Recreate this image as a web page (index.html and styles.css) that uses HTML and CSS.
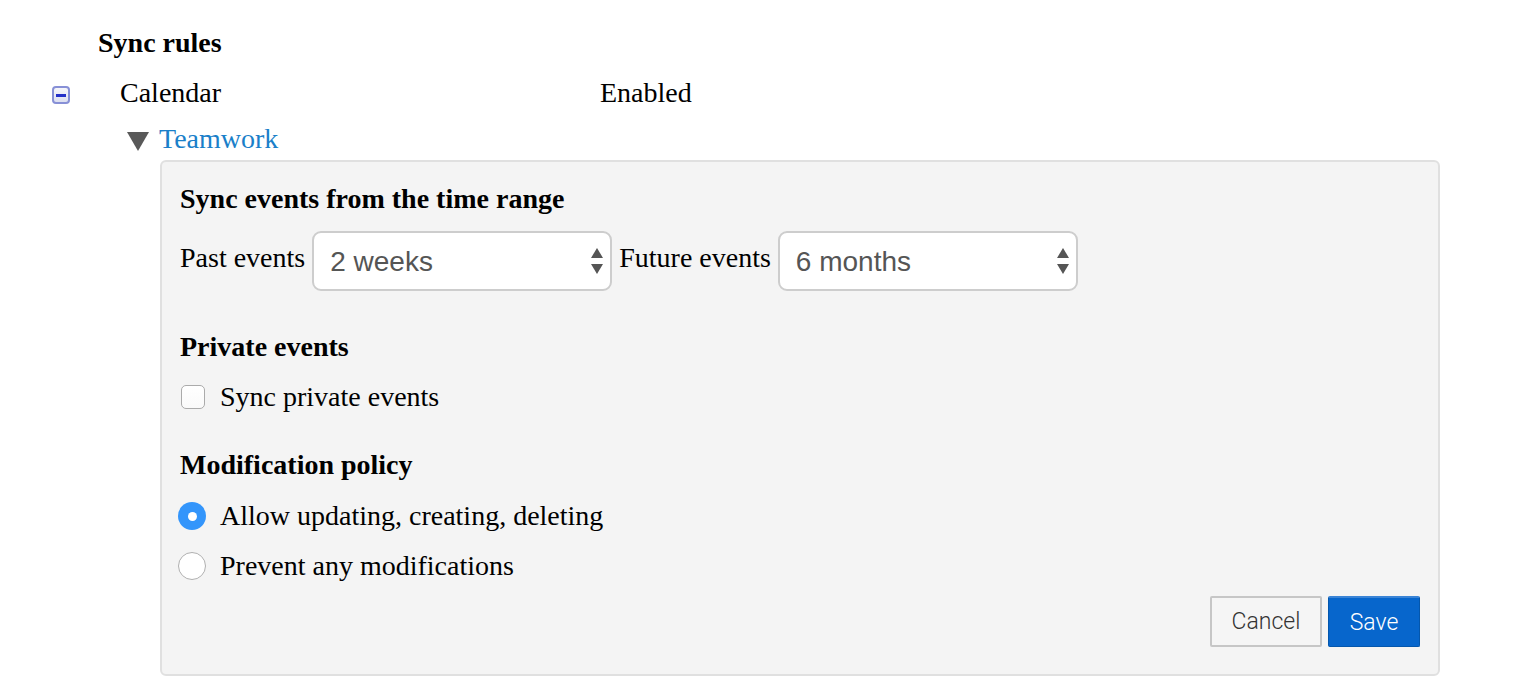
FILE: index.html
```html
<!DOCTYPE html>
<html>
<head>
<meta charset="utf-8">
<link rel="stylesheet" href="styles.css">
</head>
<body>
<div class="page">
  <h2 class="title">Sync rules</h2>
  <div class="cal-row">
    <span class="collapse-icon"><span class="bar"></span></span>
    <span class="cal-name">Calendar</span>
    <span class="cal-status">Enabled</span>
  </div>
  <div class="acct-row">
    <svg class="tri" width="22" height="19" viewBox="0 0 22 19"><polygon points="0,0 22,0 11,19" fill="#595959"/></svg>
    <a class="acct">Teamwork</a>
  </div>
  <div class="panel">
    <h3 class="sec">Sync events from the time range</h3>
    <div class="range-row">
      <span class="lbl">Past events</span>
      <div class="sel"><span class="sel-text">2 weeks</span>
        <svg class="arr" width="12" height="26" viewBox="0 0 12 26"><polygon points="6,0 12,10 0,10" fill="#555"/><polygon points="0,16 12,16 6,26" fill="#555"/></svg>
      </div>
      <span class="lbl">Future events</span>
      <div class="sel"><span class="sel-text">6 months</span>
        <svg class="arr" width="12" height="26" viewBox="0 0 12 26"><polygon points="6,0 12,10 0,10" fill="#555"/><polygon points="0,16 12,16 6,26" fill="#555"/></svg>
      </div>
    </div>
    <h3 class="sec sec2">Private events</h3>
    <label class="opt chk-row"><span class="checkbox"></span><span>Sync private events</span></label>
    <h3 class="sec sec3">Modification policy</h3>
    <label class="opt radio-row r1"><span class="radio on"></span><span>Allow updating, creating, deleting</span></label>
    <label class="opt radio-row r2"><span class="radio"></span><span>Prevent any modifications</span></label>
    <div class="actions">
      <button class="btn cancel">Cancel</button>
      <button class="btn save">Save</button>
    </div>
  </div>
</div>
</body>
</html>
```

FILE: styles.css
```css
html, body {
  margin: 0;
  padding: 0;
  background: #fff;
}
body {
  font-family: "Liberation Serif", "Times New Roman", serif;
  font-size: 28px;
  line-height: 32px;
  color: #000;
}
.page {
  padding-top: 27px;
}
.title {
  margin: 0 0 0 98px;
  font-size: 28px;
  line-height: 32px;
  font-weight: bold;
}
.cal-row {
  display: flex;
  align-items: center;
  height: 32px;
  margin-top: 18px;
}
.collapse-icon {
  box-sizing: border-box;
  width: 18px;
  height: 18px;
  margin-left: 52px;
  border: 2px solid #8790d6;
  border-radius: 4px;
  background: linear-gradient(#f6f6fb, #dcdff0);
  display: flex;
  align-items: center;
  justify-content: center;
  margin-top: 4px;
}
.collapse-icon .bar {
  width: 10px;
  height: 3px;
  background: #2430c8;
}
.cal-name {
  margin-left: 50px;
  width: 480px;
}
.acct-row {
  display: flex;
  align-items: center;
  height: 32px;
  margin-top: 14px;
}
.tri {
  margin-left: 127px;
  margin-top: 4px;
}
.acct {
  margin-left: 10px;
  color: #1a7fc9;
  text-decoration: none;
}
.panel {
  box-sizing: border-box;
  margin: 5px 0 0 160px;
  width: 1280px;
  background: #f4f4f4;
  border: 2px solid #e0e0e0;
  border-radius: 6px;
  padding: 21px 18px 27px 18px;
}
.sec {
  margin: 0;
  font-size: 28px;
  line-height: 32px;
  font-weight: bold;
}
.range-row {
  display: flex;
  align-items: center;
  gap: 7px;
  margin-top: 16px;
  height: 60px;
}
.lbl {
  margin-top: -6px;
}
.sel {
  box-sizing: border-box;
  width: 300px;
  height: 60px;
  background: #fff;
  border: 2px solid #cdcdcd;
  border-radius: 9px;
  display: flex;
  align-items: center;
  justify-content: space-between;
  padding: 0 7px 0 16px;
}
.sel-text {
  font-family: "Liberation Sans", Arial, sans-serif;
  font-size: 28px;
  color: #555;
  margin-top: 2px;
}
.sec2 {
  margin-top: 40px;
}
.opt {
  display: flex;
  align-items: center;
  height: 32px;
}
.chk-row {
  margin-top: 18px;
}
.checkbox {
  box-sizing: border-box;
  width: 24px;
  height: 24px;
  border: 1.5px solid #ababab;
  border-radius: 5px;
  background: linear-gradient(#fff, #fafafa);
  margin-left: 1px;
  margin-right: 15px;
}
.sec3 {
  margin-top: 36px;
}
.radio-row.r1 {
  margin-top: 19px;
}
.radio-row.r2 {
  margin-top: 18px;
}
.radio {
  box-sizing: border-box;
  width: 28px;
  height: 28px;
  border-radius: 50%;
  border: 1.5px solid #b0b0b0;
  background: #fff;
  margin-left: -2px;
  margin-right: 14px;
  display: flex;
  align-items: center;
  justify-content: center;
}
.radio.on {
  border: none;
  background: #3395fb;
}
.radio.on::after {
  content: "";
  width: 9px;
  height: 9px;
  border-radius: 50%;
  background: #fff;
}
.actions {
  display: flex;
  justify-content: flex-end;
  gap: 6px;
  margin-top: 14px;
}
.btn {
  box-sizing: border-box;
  height: 51px;
  font-family: Roboto, "Liberation Sans", Arial, sans-serif;
  font-weight: 300;
  font-size: 23px;
  border-radius: 2px;
  padding: 0;
}
.cancel {
  width: 112px;
  background: #f5f5f5;
  border: 2px solid #c6c6c6;
  color: #333;
}
.save {
  width: 92px;
  background: #0766cc;
  border: 1px solid #0457ad;
  border-top: 2px solid #3a84d6;
  color: #fff;
}
```
